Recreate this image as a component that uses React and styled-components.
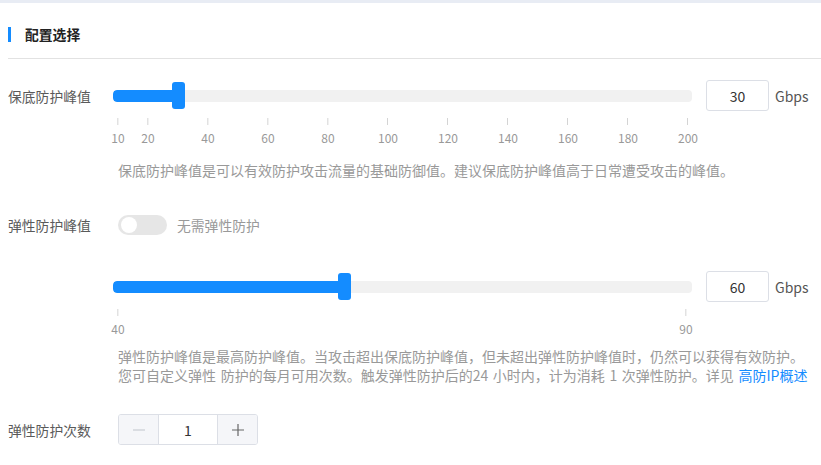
import React from "react";
import styled, { createGlobalStyle } from "styled-components";

const GlobalStyle = createGlobalStyle`
  html, body {
    margin: 0;
    padding: 0;
    background: #fff;
  }
  body {
    font-family: "Noto Sans CJK SC", "Noto Sans", sans-serif;
    color: #555;
  }
`;

const BLUE = "#148cff";

const TopStrip = styled.div`
  height: 3px;
  background: #e8ecf4;
`;

const Content = styled.div`
  padding-left: 8px;
`;

const SectionTitle = styled.div`
  margin-top: 24px;
  height: 15px;
  line-height: 15px;
  border-left: 3px solid ${BLUE};
  padding-left: 14px;
  font-size: 13.8px;
  font-weight: bold;
  color: #222;
`;

const Divider = styled.div`
  margin-top: 16px;
  height: 1px;
  background: #e2e2e2;
`;

const FieldRow = styled.div`
  display: flex;
  align-items: center;
  margin-top: ${(p) => p.$top || 0}px;
`;

const Label = styled.div`
  width: 110px;
  flex-shrink: 0;
  font-size: 13.8px;
  color: #5a5a5a;
  line-height: 20px;
`;

const SliderBox = styled.div`
  position: relative;
  width: 579px;
  height: 27px;
  margin-left: -5px;
  display: flex;
  align-items: center;
`;

const Track = styled.div`
  position: relative;
  width: 100%;
  height: 12px;
  border-radius: 4px;
  background: #f1f1f1;
  overflow: hidden;
`;

const Fill = styled.div`
  height: 100%;
  background: ${BLUE};
  border-radius: 4px 0 0 4px;
`;

const Handle = styled.div`
  position: absolute;
  top: 0;
  width: 13px;
  height: 27px;
  margin-left: -6.5px;
  border-radius: 3px;
  background: ${BLUE};
`;

const NumberBox = styled.div`
  width: 61px;
  height: 29px;
  margin-left: 14px;
  border: 1px solid #dcdfe6;
  border-radius: 3px;
  display: flex;
  align-items: center;
  justify-content: center;
  font-size: 14px;
  color: #333;
`;

const Unit = styled.span`
  margin-left: 6px;
  font-size: 14px;
  color: #555;
`;

const Scale = styled.div`
  position: relative;
  margin-left: 110px;
  margin-top: 7px;
  width: 570px;
  height: 28px;
`;

const Tick = styled.div`
  position: absolute;
  top: 0;
  display: flex;
  flex-direction: column;
  align-items: center;
  transform: translateX(-50%);
`;

const TickMark = styled.div`
  width: 1px;
  height: 7px;
  background: #d4d4d4;
`;

const TickText = styled.div`
  margin-top: 6px;
  font-size: 12px;
  line-height: 14px;
  color: #999;
`;

const Desc = styled.div`
  margin-left: 110px;
  margin-top: ${(p) => p.$top || 0}px;
  font-size: 14px;
  line-height: 19px;
  word-spacing: 1.5px;
  color: #999;
  white-space: nowrap;
`;

const Link = styled.a`
  color: ${BLUE};
  text-decoration: none;
`;

const Toggle = styled.div`
  position: relative;
  width: 49px;
  height: 20px;
  border-radius: 10px;
  background: #e6e6e6;
  flex-shrink: 0;
`;

const Knob = styled.div`
  position: absolute;
  top: 2px;
  left: 3px;
  width: 16px;
  height: 16px;
  border-radius: 50%;
  background: #fff;
`;

const ToggleText = styled.span`
  margin-left: 10px;
  font-size: 13.8px;
  color: #999;
`;

const Stepper = styled.div`
  display: flex;
  height: 29px;
  border: 1px solid #dcdfe6;
  border-radius: 3px;
  overflow: hidden;
`;

const StepBtn = styled.div`
  width: 39px;
  display: flex;
  align-items: center;
  justify-content: center;
  background: #f5f6f9;
  color: ${(p) => (p.$disabled ? "#c0c4cc" : "#666")};
  border-left: ${(p) => (p.$right ? "1px solid #dcdfe6" : "none")};
  border-right: ${(p) => (p.$right ? "none" : "1px solid #dcdfe6")};
`;

const StepValue = styled.div`
  width: 58px;
  display: flex;
  align-items: center;
  justify-content: center;
  font-size: 14px;
  color: #333;
`;

function Slider({ min, max, value, span = 570 }) {
  // ticks start 5px into the 579px track
  const pos = 5 + ((value - min) / (max - min)) * span;
  return (
    <SliderBox>
      <Track>
        <Fill style={{ width: pos }} />
      </Track>
      <Handle style={{ left: pos }} />
    </SliderBox>
  );
}

function Ticks({ min, max, marks, span = 570 }) {
  return (
    <Scale>
      {marks.map((m) => (
        <Tick key={m} style={{ left: ((m - min) / (max - min)) * span }}>
          <TickMark />
          <TickText>{m}</TickText>
        </Tick>
      ))}
    </Scale>
  );
}

const Minus = () => (
  <svg width="14" height="14" viewBox="0 0 14 14">
    <path d="M1 7h12" stroke="currentColor" strokeWidth="1.2" />
  </svg>
);

const Plus = () => (
  <svg width="14" height="14" viewBox="0 0 14 14">
    <path d="M1 7h12M7 1v12" stroke="currentColor" strokeWidth="1.2" />
  </svg>
);

export default function App() {
  return (
    <>
      <GlobalStyle />
      <TopStrip />
      <Content>
        <SectionTitle>配置选择</SectionTitle>
        <Divider />

        <FieldRow $top={21}>
          <Label>保底防护峰值</Label>
          <Slider min={10} max={200} value={30} />
          <NumberBox>30</NumberBox>
          <Unit>Gbps</Unit>
        </FieldRow>
        <Ticks
          min={10}
          max={200}
          marks={[10, 20, 40, 60, 80, 100, 120, 140, 160, 180, 200]}
        />
        <Desc $top={15}>
          保底防护峰值是可以有效防护攻击流量的基础防御值。建议保底防护峰值高于日常遭受攻击的峰值。
        </Desc>

        <FieldRow $top={35}>
          <Label>弹性防护峰值</Label>
          <Toggle>
            <Knob />
          </Toggle>
          <ToggleText>无需弹性防护</ToggleText>
        </FieldRow>

        <FieldRow $top={36}>
          <Label />
          <Slider min={40} max={90} value={60} span={567} />
          <NumberBox>60</NumberBox>
          <Unit>Gbps</Unit>
        </FieldRow>
        <Ticks min={40} max={90} marks={[40, 90]} span={568} />
        <Desc $top={10}>
          弹性防护峰值是最高防护峰值。当攻击超出保底防护峰值，但未超出弹性防护峰值时，仍然可以获得有效防护。
          <br />
          您可自定义弹性 防护的每月可用次数。触发弹性防护后的24 小时内，计为消耗 1 次弹性防护。详见{" "}
          <Link href="#">高防IP概述</Link>
        </Desc>

        <FieldRow $top={29}>
          <Label>弹性防护次数</Label>
          <Stepper>
            <StepBtn $disabled>
              <Minus />
            </StepBtn>
            <StepValue>1</StepValue>
            <StepBtn $right>
              <Plus />
            </StepBtn>
          </Stepper>
        </FieldRow>
      </Content>
    </>
  );
}
